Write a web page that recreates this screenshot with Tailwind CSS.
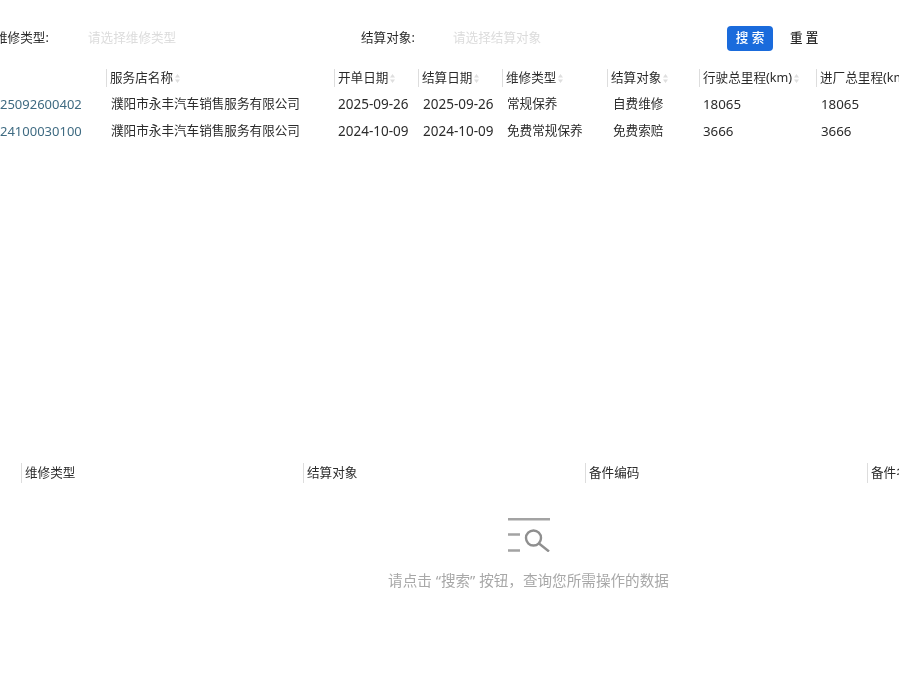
<!DOCTYPE html>
<html lang="zh-CN">
<head>
  <meta charset="utf-8">
  <meta name="viewport" content="width=device-width, initial-scale=1">
  <title>维修记录</title>
  <script src="https://cdn.jsdelivr.net/npm/@tailwindcss/browser@4"></script>
</head>
<body class="bg-white overflow-hidden">
<div class="w-[899px] h-[675px] overflow-hidden flex flex-col blur-[0.3px] text-[12.6px] text-[#2b2b2b] font-['Noto_Sans','Noto_Sans_CJK_SC',sans-serif]">

  <!-- filter bar -->
  <div class="flex items-center h-[25px] mt-[26px] -ml-[5px] shrink-0">
    <span class="w-[93px] shrink-0 whitespace-nowrap">维修类型:</span>
    <span class="w-[273px] shrink-0 text-[#dcdcdc] whitespace-nowrap blur-[0.7px]">请选择维修类型</span>
    <span class="w-[92px] shrink-0 whitespace-nowrap">结算对象:</span>
    <span class="w-[274px] shrink-0 text-[#dcdcdc] whitespace-nowrap blur-[0.7px]">请选择结算对象</span>
    <button class="w-[46px] h-[25px] rounded-sm bg-[#1a6bdc] text-white font-medium shrink-0">搜 索</button>
    <span class="ml-[17px] font-medium">重 置</span>
  </div>

  <!-- upper table -->
  <div class="mt-[14px] shrink-0 w-[960px]">
    <div class="grid grid-cols-[106px_228px_84px_84px_105px_92px_117px_140px] h-[26px] items-center">
      <div></div>
      <div class="flex items-center h-[18px] border-l border-[#ddd] pl-[3px]">服务店名称<svg class="ml-[2px] w-[5px] h-[9px]" viewBox="0 0 5 9" fill="#dedede"><path d="M2.5 0L5 3.5H0ZM2.5 9L0 5.5H5Z"/></svg></div>
      <div class="flex items-center h-[18px] border-l border-[#ddd] pl-[3px]">开单日期<svg class="ml-[2px] w-[5px] h-[9px]" viewBox="0 0 5 9" fill="#dedede"><path d="M2.5 0L5 3.5H0ZM2.5 9L0 5.5H5Z"/></svg></div>
      <div class="flex items-center h-[18px] border-l border-[#ddd] pl-[3px]">结算日期<svg class="ml-[2px] w-[5px] h-[9px]" viewBox="0 0 5 9" fill="#dedede"><path d="M2.5 0L5 3.5H0ZM2.5 9L0 5.5H5Z"/></svg></div>
      <div class="flex items-center h-[18px] border-l border-[#ddd] pl-[3px]">维修类型<svg class="ml-[2px] w-[5px] h-[9px]" viewBox="0 0 5 9" fill="#dedede"><path d="M2.5 0L5 3.5H0ZM2.5 9L0 5.5H5Z"/></svg></div>
      <div class="flex items-center h-[18px] border-l border-[#ddd] pl-[3px]">结算对象<svg class="ml-[2px] w-[5px] h-[9px]" viewBox="0 0 5 9" fill="#dedede"><path d="M2.5 0L5 3.5H0ZM2.5 9L0 5.5H5Z"/></svg></div>
      <div class="flex items-center h-[18px] border-l border-[#ddd] pl-[3px] whitespace-nowrap">行驶总里程(km)<svg class="ml-[2px] w-[5px] h-[9px]" viewBox="0 0 5 9" fill="#dedede"><path d="M2.5 0L5 3.5H0ZM2.5 9L0 5.5H5Z"/></svg></div>
      <div class="flex items-center h-[18px] border-l border-[#ddd] pl-[3px] whitespace-nowrap">进厂总里程(km)</div>
    </div>
    <div class="grid grid-cols-[106px_228px_84px_84px_105px_92px_117px_140px] h-[27px] items-center whitespace-nowrap">
      <div class="text-[#3f6b82] text-[13px]">25092600402</div>
      <div class="pl-[5px]">濮阳市永丰汽车销售服务有限公司</div>
      <div class="pl-[4px] text-[13.5px]">2025-09-26</div>
      <div class="pl-[5px] text-[13.5px]">2025-09-26</div>
      <div class="pl-[5px]">常规保养</div>
      <div class="pl-[6px]">自费维修</div>
      <div class="pl-[4px] text-[13.3px]">18065</div>
      <div class="pl-[5px] text-[13.3px]">18065</div>
    </div>
    <div class="grid grid-cols-[106px_228px_84px_84px_105px_92px_117px_140px] h-[27px] items-center whitespace-nowrap">
      <div class="text-[#3f6b82] text-[13px]">24100030100</div>
      <div class="pl-[5px]">濮阳市永丰汽车销售服务有限公司</div>
      <div class="pl-[4px] text-[13.5px]">2024-10-09</div>
      <div class="pl-[5px] text-[13.5px]">2024-10-09</div>
      <div class="pl-[5px]">免费常规保养</div>
      <div class="pl-[6px]">免费索赔</div>
      <div class="pl-[4px] text-[13.3px]">3666</div>
      <div class="pl-[5px] text-[13.3px]">3666</div>
    </div>
  </div>

  <!-- lower table -->
  <div class="mt-[318px] ml-[21px] w-[1128px] shrink-0 grid grid-cols-4 h-[20px] items-center">
    <div class="h-[20px] flex items-center border-l border-[#ddd] pl-[3px]">维修类型</div>
    <div class="h-[20px] flex items-center border-l border-[#ddd] pl-[3px]">结算对象</div>
    <div class="h-[20px] flex items-center border-l border-[#ddd] pl-[3px]">备件编码</div>
    <div class="h-[20px] flex items-center border-l border-[#ddd] pl-[3px]">备件名称</div>
  </div>

  <!-- empty state -->
  <div class="flex flex-col items-center mt-[35px] w-[1057px] shrink-0">
    <svg class="w-[42px] h-[34px]" viewBox="0 0 42 34" fill="none" stroke-width="2.4">
      <path d="M0 1.2H42M0 16.5H12M0 32.5H12" stroke="#a3a3a3"/>
      <circle cx="25.5" cy="20" r="7.5" stroke="#8f8f8f"/>
      <path d="M31 25.5L41 33.5" stroke="#8f8f8f"/>
    </svg>
    <p class="mt-[18px] text-[14.6px] text-[#a8a8a8] whitespace-nowrap">请点击 “搜索” 按钮，查询您所需操作的数据</p>
  </div>
</div>
</body>
</html>
